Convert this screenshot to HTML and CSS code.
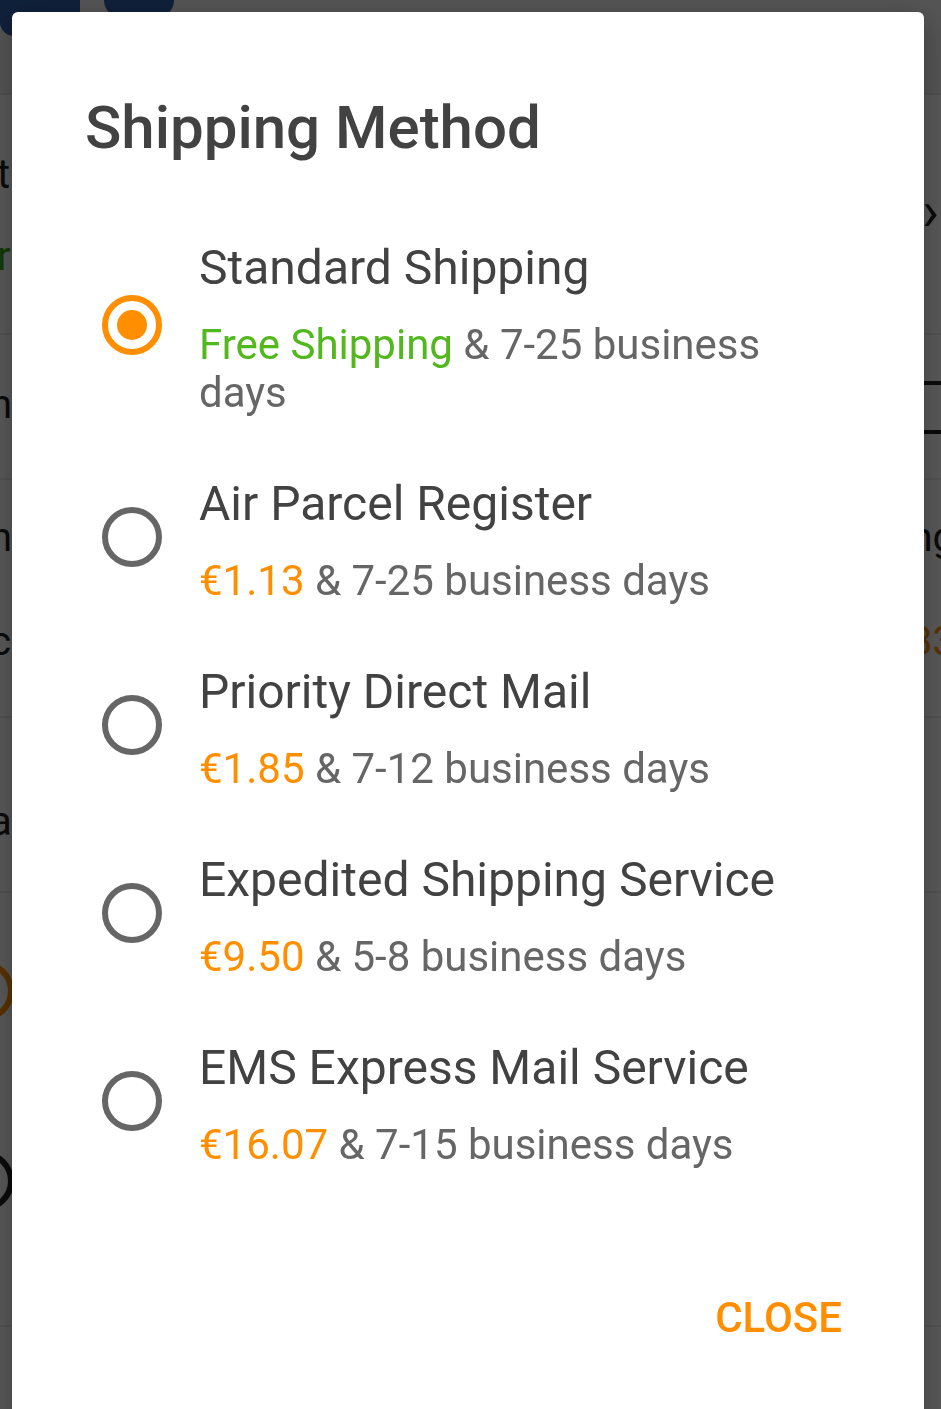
FILE: index.html
```html
<!DOCTYPE html>
<html lang="en">
<head>
    <meta charset="utf-8">
    <title>Shipping Method</title>
    <link rel="stylesheet" href="styles.css">
</head>
<body>

    <div class="page">
        <div class="page-head">
            <span class="pic pic-a"></span>
            <span class="pic pic-b"></span>
        </div>
        <div class="row row-1">
            <div class="row-left">
                <span class="frag frag-t">t</span>
                <span class="frag frag-green">r</span>
            </div>
            <div class="row-right">
                <span class="chevron">&#8250;</span>
            </div>
        </div>
        <div class="row row-2">
            <div class="row-left">
                <span class="frag frag-n">n</span>
            </div>
            <div class="row-right">
                <span class="stepper"></span>
            </div>
        </div>
        <div class="row row-3">
            <div class="row-left">
                <span class="frag">h</span>
                <span class="frag">c</span>
            </div>
            <div class="row-right">
                <span class="frag frag-end">ng</span>
                <span class="frag frag-end frag-orange">33</span>
            </div>
        </div>
        <div class="row row-4">
            <div class="row-left">
                <span class="frag">a</span>
            </div>
        </div>
        <div class="row row-5">
            <div class="row-left">
                <span class="ring ring-orange"></span>
                <span class="ring"></span>
            </div>
        </div>
        <div class="row row-6">
            <div class="row-left">
                <span class="frag">i</span>
            </div>
        </div>
    </div>

    <div class="scrim"></div>

    <div class="dialog">
        <h1 class="dialog-title">Shipping Method</h1>

        <ul class="options">
            <li class="option">
                <span class="radio checked"></span>
                <div class="option-text">
                    <div class="option-name">Standard Shipping</div>
                    <div class="option-info"><span class="free">Free Shipping</span> &amp; 7-25 business days</div>
                </div>
            </li>
            <li class="option">
                <span class="radio"></span>
                <div class="option-text">
                    <div class="option-name">Air Parcel Register</div>
                    <div class="option-info"><span class="price">€1.13</span> &amp; 7-25 business days</div>
                </div>
            </li>
            <li class="option">
                <span class="radio"></span>
                <div class="option-text">
                    <div class="option-name">Priority Direct Mail</div>
                    <div class="option-info"><span class="price">€1.85</span> &amp; 7-12 business days</div>
                </div>
            </li>
            <li class="option">
                <span class="radio"></span>
                <div class="option-text">
                    <div class="option-name">Expedited Shipping Service</div>
                    <div class="option-info"><span class="price">€9.50</span> &amp; 5-8 business days</div>
                </div>
            </li>
            <li class="option">
                <span class="radio"></span>
                <div class="option-text">
                    <div class="option-name">EMS Express Mail Service</div>
                    <div class="option-info"><span class="price">€16.07</span> &amp; 7-15 business days</div>
                </div>
            </li>
        </ul>

        <div class="dialog-actions">
            <a href="#" class="btn-close">CLOSE</a>
        </div>
    </div>

</body>
</html>
```

FILE: styles.css
```css
* {
    margin: 0;
    padding: 0;
    box-sizing: border-box;
}
html, body {
    height: 100%;
}
body {
    background: #fff;
    font-family: Roboto, "Noto Sans", Arial, sans-serif;
    overflow: hidden;
}
a {
    text-decoration: none;
}

/* page behind the dialog */
.page {
    width: 941px;
    background: #fff;
    color: #222;
    font-size: 40px;
}
.page-head {
    height: 95px;
    display: flex;
    gap: 24px;
    border-bottom: 2px solid #e6e6e6;
    background: #f4f4f4;
}
.pic {
    display: block;
    background: #2f5fa8;
    border-radius: 0 0 14px 14px;
}
.pic-a {
    width: 80px;
    height: 36px;
}
.pic-b {
    width: 70px;
    height: 18px;
    border-radius: 0 0 24px 24px;
}
.row {
    display: flex;
    justify-content: space-between;
    border-bottom: 2px solid #ececec;
}
.row-left, .row-right {
    display: flex;
    flex-direction: column;
    gap: 56px;
}
.row-right {
    align-items: flex-end;
}
.frag {
    display: block;
    line-height: 48px;
    margin-left: -10px;
}
.frag-t, .frag-green {
    margin-left: -3px;
}
.frag-end {
    margin-left: 0;
    margin-right: -14px;
}
.frag-green {
    color: #3aa61c;
}
.frag-orange {
    color: #ff8f00;
}
.row-1 {
    height: 240px;
    padding-top: 56px;
}
.row-1 .row-left {
    gap: 34px;
}
.chevron {
    display: block;
    font-size: 56px;
    line-height: 48px;
    margin-top: 36px;
    margin-right: 2px;
}
.row-2 {
    height: 145px;
    padding-top: 46px;
}
.stepper {
    display: block;
    width: 20px;
    height: 53px;
    border-top: 4px solid #222;
    border-bottom: 4px solid #222;
}
.row-3 {
    height: 238px;
    padding-top: 34px;
}
.row-4 {
    height: 175px;
    padding-top: 80px;
}
.row-5 {
    height: 434px;
    padding-top: 68px;
}
.row-5 .row-left {
    gap: 130px;
}
.ring {
    display: block;
    width: 60px;
    height: 60px;
    margin-left: -46px;
    border: 6px solid #222;
    border-radius: 50%;
}
.ring-orange {
    border-color: #ff8f00;
}
.row-6 {
    height: 200px;
    padding-top: 44px;
}

.scrim {
    position: fixed;
    inset: 0;
    background: rgba(0, 0, 0, 0.65);
}

/* dialog */
.dialog {
    position: absolute;
    top: 12px;
    left: 12px;
    width: 912px;
    height: 1460px;
    padding: 80px 73px 0;
    background: #fff;
    border-radius: 6px;
    box-shadow: 0 8px 30px rgba(0, 0, 0, 0.3);
}
.dialog-title {
    font-size: 60px;
    line-height: 72px;
    font-weight: 500;
    color: #424242;
    margin-bottom: 47px;
}
.options {
    list-style: none;
}
.option {
    display: flex;
    align-items: center;
    padding: 29px 0 30px 17px;
}
.radio {
    flex: none;
    display: flex;
    align-items: center;
    justify-content: center;
    width: 60px;
    height: 60px;
    margin-right: 37px;
    margin-bottom: 7px;
    border: 6px solid #666;
    border-radius: 50%;
}
.radio.checked {
    border-color: #ff8f00;
}
.radio.checked::after {
    content: "";
    width: 30px;
    height: 30px;
    border-radius: 50%;
    background: #ff8f00;
}
.option-name {
    font-size: 48px;
    line-height: 56px;
    color: #424242;
    margin-bottom: 25px;
}
.option-info {
    font-size: 42px;
    line-height: 48px;
    color: #666;
}
.free {
    color: #52b81e;
}
.price {
    color: #ff8f00;
}
.dialog-actions {
    display: flex;
    justify-content: flex-end;
    padding-top: 95px;
    padding-right: 9px;
}
.btn-close {
    font-size: 42px;
    line-height: 48px;
    font-weight: 500;
    color: #ff8f00;
}
```
